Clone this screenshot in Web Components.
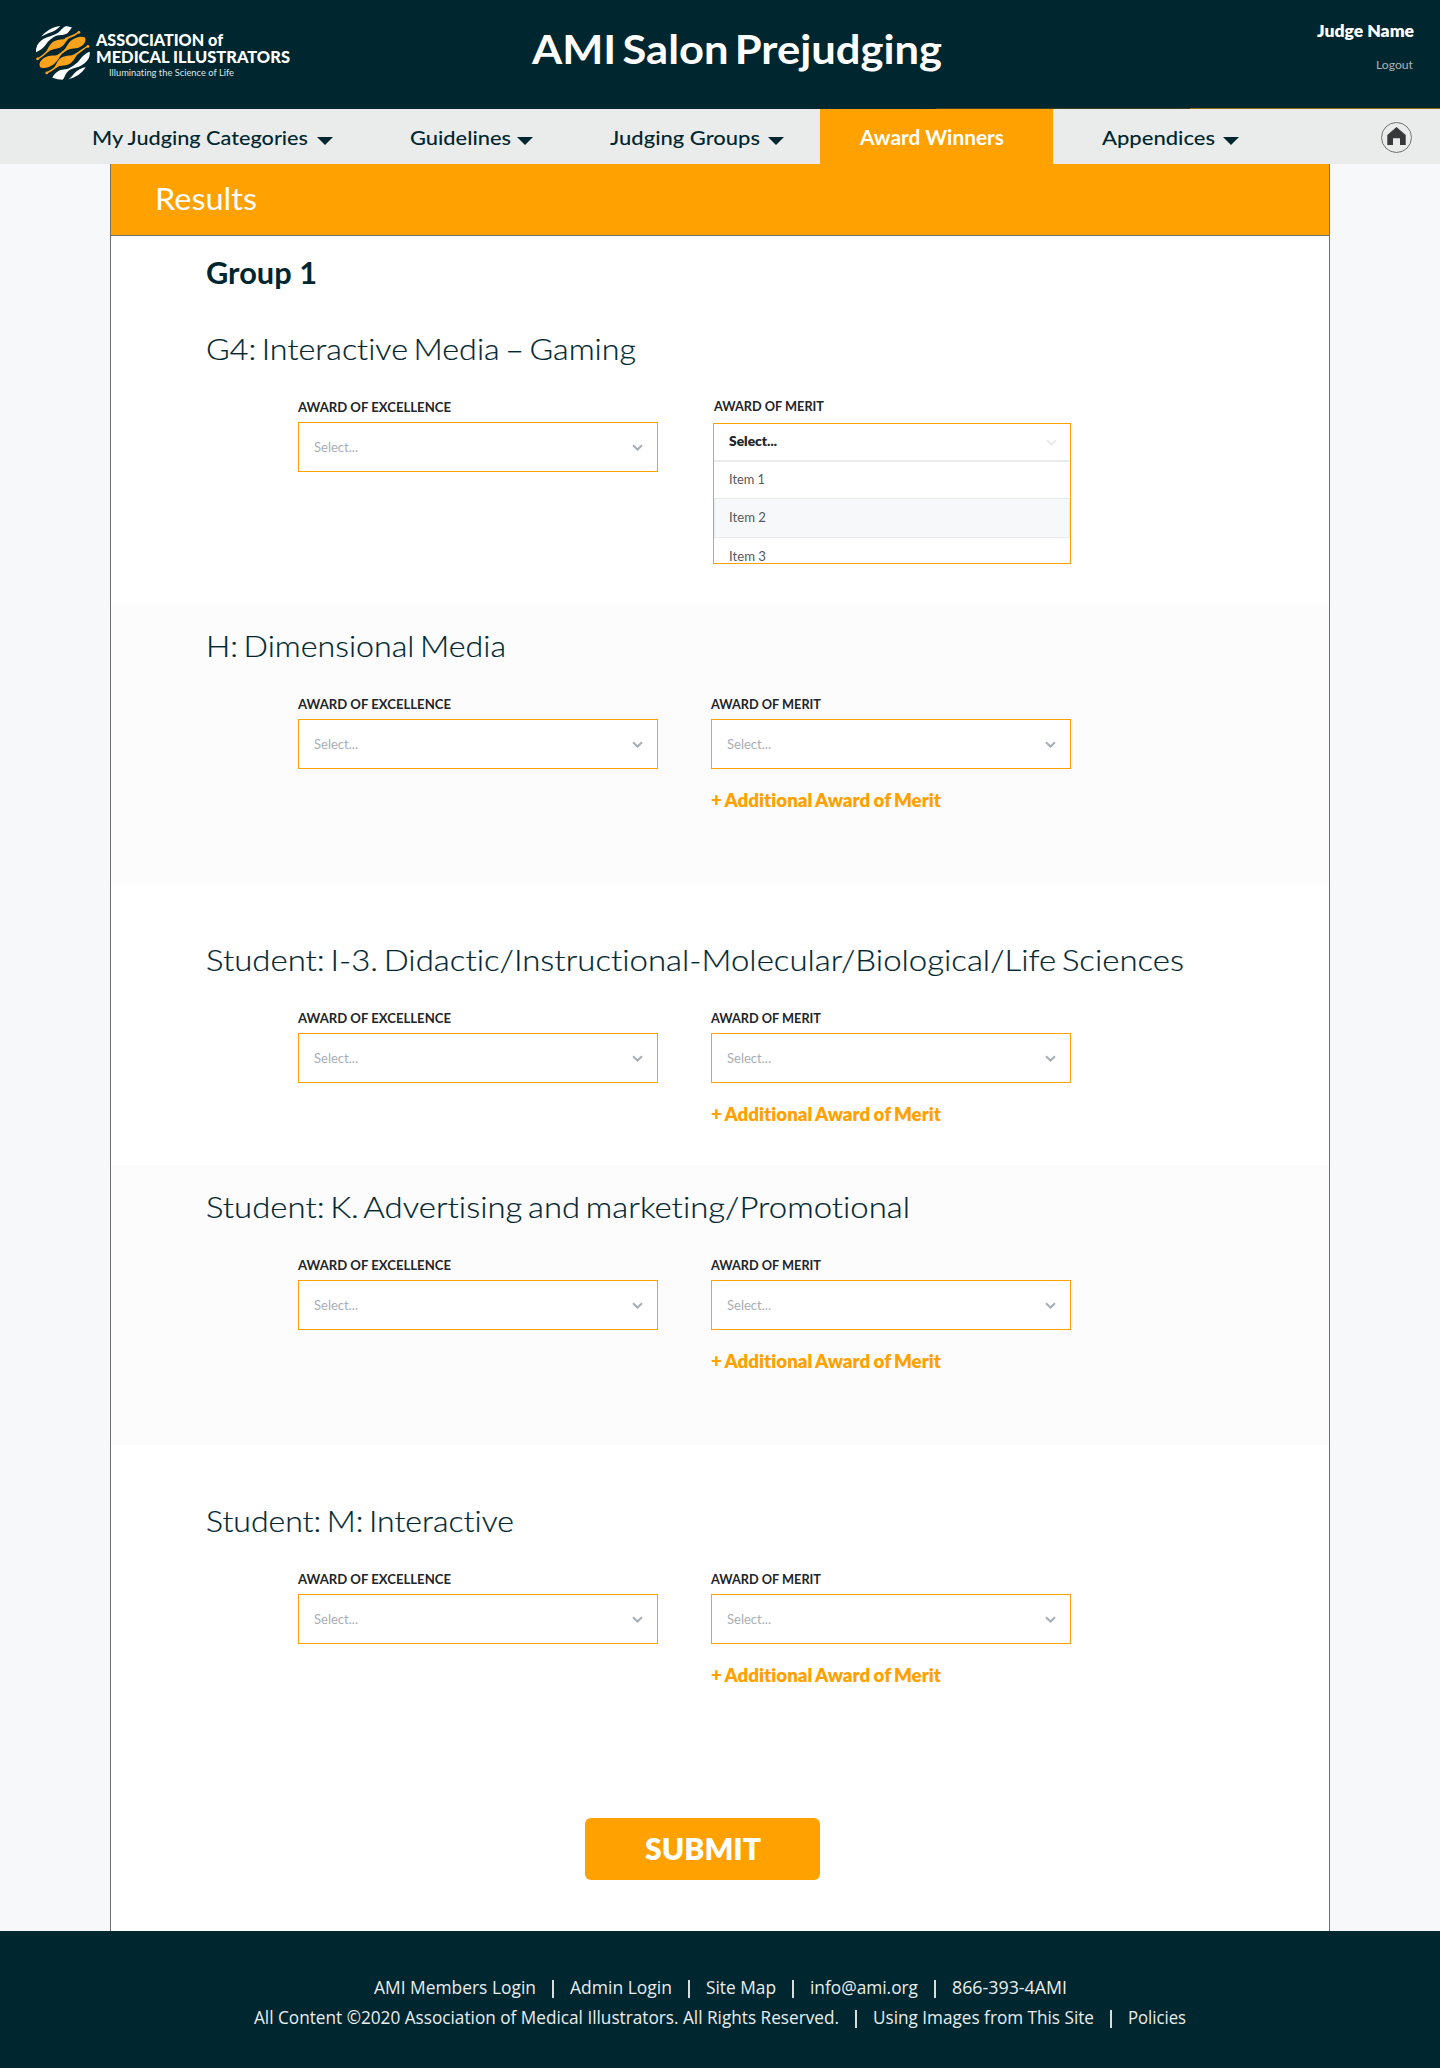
<!DOCTYPE html>
<html lang="en">
<head>
<meta charset="utf-8">
<title>AMI Salon Prejudging</title>
<style>
html,body{margin:0;padding:0}
body{width:1440px;background:#f7f8fa;font-family:Lato,"Open Sans",sans-serif;color:#002630;font-variant-ligatures:none}
</style>
</head>
<body>
<ami-page></ami-page>
<script>
const define = (name, html, setup) => {
  const t = document.createElement('template');
  customElements.define(name, class extends HTMLElement {
    connectedCallback() {
      if (this.shadowRoot) return;
      t.innerHTML = typeof html === 'function' ? html(this) : html;
      this.attachShadow({mode: 'open'}).appendChild(t.content.cloneNode(true));
      if (setup) setup(this);
    }
  });
};

/* Text run widened or narrowed so that it fills the width in its "w" attribute. */
define('fit-text', '<style>:host{display:block;white-space:nowrap;flex:none}span{display:inline-block;white-space:nowrap;transform-origin:0 50%}</style><span><slot></slot></span>', el => {
  const w = +el.getAttribute('w');
  const s = el.shadowRoot.querySelector('span');
  s.style.transform = `scaleX(${(w / s.getBoundingClientRect().width).toFixed(4)})`;
  el.style.width = w + 'px';
});

define('ami-logo', `<style>
:host{display:flex;align-items:flex-start;color:#fff}
svg{display:block;width:54px;height:54px;flex:none}
.t{display:flex;flex-direction:column;margin:5px 0 0 6px;font-weight:900;font-size:16px;line-height:17px}
.s{margin:1px 0 0 13px;font-weight:400;font-size:10px;line-height:12px;color:#dfe4e5}
</style>
<svg viewBox="48 48 161 161"><defs><clipPath id="c"><circle cx="128" cy="128" r="80.5"/></clipPath></defs>
<g clip-path="url(#c)" fill="#fff">
<path d="M61 80C67 65 82 51 104 46L122 46C112 59 100 65 86 69C77 72 70 79 61 80Z"/>
<path d="M162 48C150 46 138 46 131 52C122 59 120 66 107 72C95 78 83 80 70 87C56 95 48 108 44 127C58 124 70 114 77 104C85 91 96 84 107 78C118 73 127 77 139 71C149 66 150 54 162 48Z"/>
<path d="M212 124C198 126 186 138 179 148C171 160 160 166 148 173C137 179 124 176 114 183C103 189 98 198 94 209L127 209C135 202 134 190 146 181C156 173 169 174 184 165C198 157 206 146 212 130Z"/>
<path d="M197 170C183 173 169 181 161 190C155 198 150 203 141 210L158 210C176 203 190 188 197 170Z"/>
</g>
<g fill="none" stroke="#faa21b" stroke-linecap="round" stroke-width="5">
<path d="M176 66C160 79 148 80 136 86M88 118C76 130 66 140 52 146M150 108C132 120 122 134 104 142M203 108C188 116 176 128 160 137M116 163C104 174 92 182 80 188"/>
</g>
<g fill="#faa21b">
<circle cx="176" cy="67" r="4.2"/><circle cx="53" cy="146" r="4.2"/><circle cx="203" cy="109" r="4.2"/><circle cx="80" cy="188" r="4.2"/>
<path d="M150 80C137 92 136 102 124 110C110 119 96 113 76 130C84 114 88 104 98 96C114 84 130 92 150 80Z"/>
<path d="M194 82C199 92 192 105 178 111C162 118 148 109 126 131C137 115 142 100 155 90C167 81 182 77 194 82Z"/>
<path d="M131 124C117 139 114 153 98 164C84 174 67 175 60 170C55 157 65 146 79 140C96 132 110 142 131 124Z"/>
<path d="M178 124C165 138 163 152 148 161C133 169 118 160 98 180C110 162 111 151 123 143C139 132 155 142 178 124Z"/>
</g></svg>
<div class="t"><fit-text w="127">ASSOCIATION of</fit-text><fit-text w="194">MEDICAL ILLUSTRATORS</fit-text>
<div class="s"><fit-text w="125">Illuminating the Science of Life</fit-text></div></div>`);

define('ami-header', `<style>
:host{display:grid;grid-template-columns:532px 408px 1fr;height:109px;box-sizing:border-box;background:linear-gradient(90deg,transparent 936px,#3b4020 936px,#3b4020 1190px,#8f690f 1190px) 0 108px/100% 1px no-repeat #002630;color:#fff}
ami-logo{padding:26px 0 0 36px}
.h{margin:0;padding-top:25px;font-size:40px;line-height:48px;font-weight:700;word-spacing:-4px}
.u{display:flex;flex-direction:column;align-items:flex-end;padding:20px 26px 0 0}
.n{font-size:16px;line-height:22px;font-weight:800}
.o{font-size:12px;line-height:16px;margin:15px 1px 0 0;color:#a9b3b8}
</style><ami-logo></ami-logo><h1 class="h"><fit-text w="410">AMI Salon Prejudging</fit-text></h1>
<div class="u"><div class="n"><fit-text w="97">Judge Name</fit-text></div><div class="o"><fit-text w="37">Logout</fit-text></div></div>`);

define('nav-item', el => `<style>
:host{display:flex;align-items:flex-start;box-sizing:border-box;height:55px;padding:16px 0 0 ${el.getAttribute('pad')}px;font-size:20px;line-height:24px;font-weight:500;color:#002630;width:${el.getAttribute('width')}px;flex:none}
:host([active]){background:#ffa100;color:#fff;font-weight:700}
svg{display:block;margin:12px 0 0 ${el.getAttribute('gap') || 9}px}
</style><fit-text w="${el.getAttribute('w')}">${el.getAttribute('label')}</fit-text>${el.hasAttribute('active') ? '' : '<svg width="16" height="8"><path d="M0 0H16L8 8Z" fill="#002630"/></svg>'}`);

define('ami-nav', `<style>:host{display:flex;height:55px;background:#eaeceb}
svg.home{display:block;margin:13px 0 0 auto;padding-right:27px}
</style>
<nav-item label="My Judging Categories" w="216" pad="92" width="410"></nav-item>
<nav-item label="Guidelines" w="101" pad="0" gap="6" width="200"></nav-item>
<nav-item label="Judging Groups" w="150" pad="0" gap="8" width="210"></nav-item>
<nav-item active label="Award Winners" w="144" pad="40" width="233"></nav-item>
<nav-item label="Appendices" w="113" pad="49" gap="8" width="200"></nav-item>
<svg class="home" width="32" height="32" viewBox="0 0 32 32"><circle cx="15.5" cy="15.5" r="15" fill="none" stroke="#707070"/><path d="M15.5 5L6.3 13V23H12V16.3H19V23H24.7V13Z" fill="#38383a"/></svg>`);

define('award-field', el => `<style>
:host{display:block;width:360px}
.l{font-size:13px;line-height:16px;font-weight:700;color:#222529}
.b{display:flex;justify-content:space-between;align-items:flex-start;box-sizing:border-box;height:50px;margin-top:7px;border:1px solid #ffa100;background:#fff;padding:16px 14px 0 15px;color:#a8aeb6;font-size:13px;line-height:17px}
svg{display:block;margin-top:5px}
.a{margin-top:19px;font-size:18px;line-height:24px;font-weight:800;color:#ffa100;word-spacing:-1px}
</style><div class="l"><fit-text w="${el.hasAttribute('merit') ? 110 : 153}">${el.hasAttribute('merit') ? 'AWARD OF MERIT' : 'AWARD OF EXCELLENCE'}</fit-text></div>
<div class="b"><fit-text w="44">Select...</fit-text><svg width="11" height="8"><path d="M1 1.2L5.5 5.5L10 1.2" fill="none" stroke="#a8aeb6" stroke-width="2"/></svg></div>
${el.hasAttribute('merit') ? '<div class="a"><fit-text w="230">+ Additional Award of Merit</fit-text></div>' : ''}`);

define('award-menu', `<style>
:host{display:block;width:358px;margin:-1px 0 0 2px}
.l{padding-left:1px;font-size:13px;line-height:16px;font-weight:700;color:#222529}
.m{box-sizing:border-box;height:141px;margin-top:9px;border:1px solid #ffa100;background:#fff;overflow:hidden;font-size:13px;line-height:17px;color:#55585c}
.m>div{box-sizing:border-box;padding:9px 13px 0 15px}
.m>.s{display:flex;justify-content:space-between;height:38px;border-bottom:2px solid #ebebeb;font-weight:800;color:#222529}
.i{height:36px}.m>.x{height:40px;border:1px solid #e8eaec;background:#f7f8fa;padding:10px 14px 0}
.m>.z{padding-top:10px}
svg{display:block;margin-top:6px}
</style><div class="l"><fit-text w="110">AWARD OF MERIT</fit-text></div>
<div class="m"><div class="s"><fit-text w="48">Select...</fit-text><svg width="11" height="8"><path d="M1 1.2L5.5 5.5L10 1.2" fill="none" stroke="#e9eaeb" stroke-width="2"/></svg></div>
<div class="i"><fit-text w="36">Item 1</fit-text></div><div class="x"><fit-text w="37">Item 2</fit-text></div><div class="i z"><fit-text w="37">Item 3</fit-text></div></div>`);

define('award-section', el => `<style>
:host{display:block;box-sizing:border-box;height:${el.getAttribute('h')}px;padding-top:${el.getAttribute('top')}px}
:host([shade]){background:#fcfcfc}
.t{margin:0 0 0 95px;font-size:30px;line-height:36px;font-weight:300;color:#002630;word-spacing:-3px;-webkit-text-stroke:.2px #002630}
.f{display:grid;grid-template-columns:360px 360px;column-gap:53px;margin:33px 0 0 187px}
</style><h3 class="t"><fit-text w="${el.getAttribute('w')}">${el.getAttribute('label')}</fit-text></h3>
<div class="f"><award-field></award-field>${el.hasAttribute('open-menu') ? '<award-menu></award-menu>' : '<award-field merit></award-field>'}</div>`);

define('results-panel', `<style>
:host{display:block;box-sizing:border-box;width:1220px;height:1767px;margin:0 auto;border:solid #707070;border-width:0 1px;background:#fff}
.r{height:71px;box-sizing:content-box;border-bottom:1px solid #707070;background:#ffa100;color:#fff;font-size:30px;line-height:36px;font-weight:400}
.r fit-text{padding:16px 0 0 44px}
.g{margin:0;padding:18px 0 0 95px;height:57px;font-size:30px;line-height:36px;font-weight:700}
.k{display:flex;justify-content:center;margin:32px 0 0 474px;width:235px;height:62px;border:0;border-radius:6px;background:#ffa100;color:#fff;padding:12px 0 0;box-sizing:border-box;font:800 30px/36px Lato,sans-serif}
</style>
<div class="r"><fit-text w="102">Results</fit-text></div>
<h2 class="g"><fit-text w="111">Group 1</fit-text></h2>
<award-section label="G4: Interactive Media – Gaming" w="430" top="19" h="293" open-menu></award-section>
<award-section label="H: Dimensional Media" w="300" top="23" h="280" shade></award-section>
<award-section label="Student: I-3. Didactic/Instructional-Molecular/Biological/Life Sciences" w="978" top="57" h="281"></award-section>
<award-section label="Student: K. Advertising and marketing/Promotional" w="704" top="23" h="280" shade></award-section>
<award-section label="Student: M: Interactive" w="308" top="57" h="341"></award-section>
<button class="k"><fit-text w="116">SUBMIT</fit-text></button>`);

define('ami-footer', `<style>
:host{display:flex;flex-direction:column;align-items:center;box-sizing:border-box;height:137px;padding-top:44px;background:#002630;color:#e9edee;font-family:"Open Sans","Noto Sans",sans-serif;font-size:17.5px;line-height:24px}
.q{display:flex;margin-bottom:6px}
i{width:2px;height:18px;background:#d8dddd;margin:5px 16px 0 16px}
</style>
<div class="q"><fit-text w="162">AMI Members Login</fit-text><i></i><fit-text w="102">Admin Login</fit-text><i></i><fit-text w="70">Site Map</fit-text><i></i><fit-text w="108">info@ami.org</fit-text><i></i><fit-text w="115">866-393-4AMI</fit-text></div>
<div class="q"><fit-text w="585">All Content ©2020 Association of Medical Illustrators. All Rights Reserved.</fit-text><i></i><fit-text w="221">Using Images from This Site</fit-text><i></i><fit-text w="58">Policies</fit-text></div>`);

define('ami-page', `<style>:host{display:block;width:1440px;height:2068px}</style>
<ami-header></ami-header><ami-nav></ami-nav><results-panel></results-panel><ami-footer></ami-footer>`);
</script>
</body>
</html>
